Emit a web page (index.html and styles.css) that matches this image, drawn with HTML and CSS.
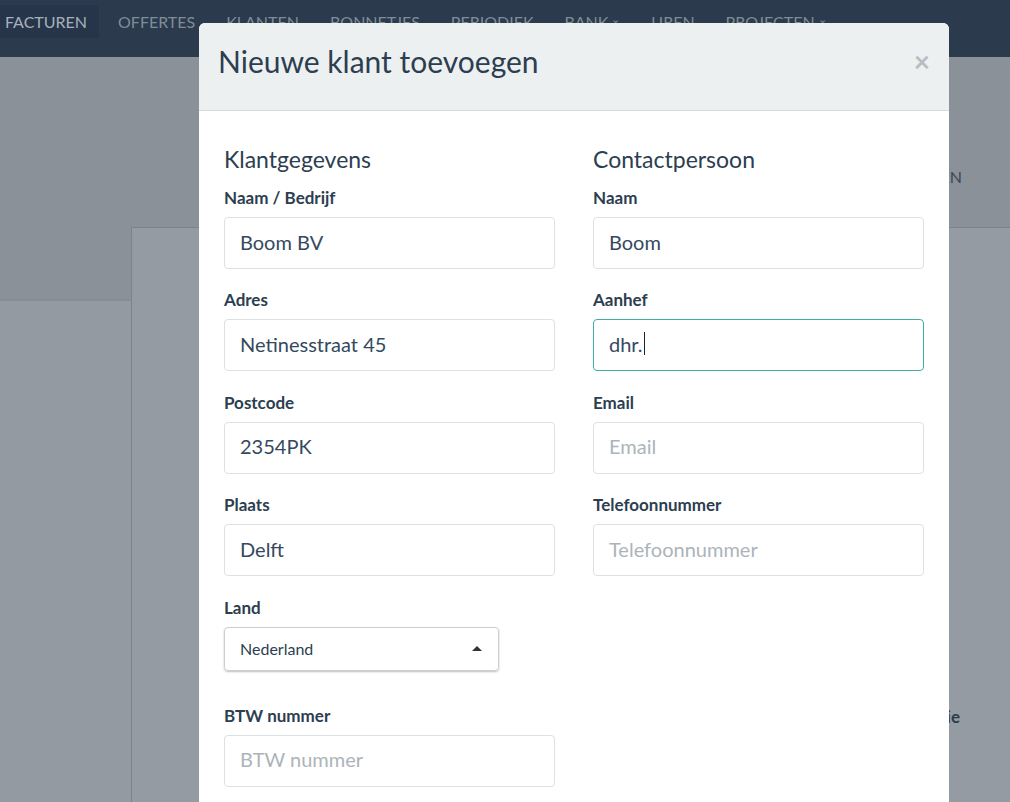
FILE: index.html
```html
<!DOCTYPE html>
<html lang="nl">
<head>
<meta charset="utf-8">
<title>Nieuwe klant toevoegen</title>
<link rel="stylesheet" href="styles.css">
</head>
<body>
<div class="page">
  <nav class="nav">
    <a class="nav-item active">Facturen</a>
    <a class="nav-item">Offertes</a>
    <a class="nav-item">Klanten</a>
    <a class="nav-item">Bonnetjes</a>
    <a class="nav-item">Periodiek</a>
    <a class="nav-item">Bank <span class="caret">&#8964;</span></a>
    <a class="nav-item">Uren</a>
    <a class="nav-item">Projecten <span class="caret">&#8964;</span></a>
  </nav>
  <div class="banner">
    <span class="banner-btn">KLANT TOEVOEGEN</span>
  </div>
  <div class="content">
    <div class="side">
      <div class="side-top"></div>
    </div>
    <div class="panel">
      <div class="panel-label">Categorie</div>
    </div>
  </div>

  <div class="modal">
    <div class="modal-header">
      <h2 class="modal-title">Nieuwe klant toevoegen</h2>
      <span class="close">&times;</span>
    </div>
    <div class="modal-body">
      <div class="col">
        <h3 class="section-title">Klantgegevens</h3>
        <div class="group">
          <label class="label">Naam / Bedrijf</label>
          <div class="input">Boom BV</div>
        </div>
        <div class="group">
          <label class="label">Adres</label>
          <div class="input">Netinesstraat 45</div>
        </div>
        <div class="group">
          <label class="label">Postcode</label>
          <div class="input">2354PK</div>
        </div>
        <div class="group">
          <label class="label">Plaats</label>
          <div class="input">Delft</div>
        </div>
        <div class="group group-select">
          <label class="label">Land</label>
          <div class="select"><span>Nederland</span><span class="tri"></span></div>
        </div>
        <div class="group">
          <label class="label">BTW nummer</label>
          <div class="input placeholder">BTW nummer</div>
        </div>
      </div>
      <div class="col">
        <h3 class="section-title">Contactpersoon</h3>
        <div class="group">
          <label class="label">Naam</label>
          <div class="input">Boom</div>
        </div>
        <div class="group">
          <label class="label">Aanhef</label>
          <div class="input focus">dhr.<span class="cursor"></span></div>
        </div>
        <div class="group">
          <label class="label">Email</label>
          <div class="input placeholder">Email</div>
        </div>
        <div class="group">
          <label class="label">Telefoonnummer</label>
          <div class="input placeholder">Telefoonnummer</div>
        </div>
      </div>
    </div>
  </div>
</div>
</body>
</html>
```

FILE: styles.css
```css
* { box-sizing: border-box; }
html, body {
  margin: 0;
  height: 100%;
}
body {
  font-family: Lato, "Open Sans", "Liberation Sans", sans-serif;
  background: #939aa2;
  overflow: hidden;
}
.page {
  position: relative;
  height: 802px;
  overflow: hidden;
}
.nav {
  height: 57px;
  background: #2b3a4c;
  display: flex;
  align-items: flex-start;
  gap: 7px;
  padding-top: 5px;
}
.nav-item {
  display: flex;
  align-items: center;
  height: 33px;
  padding: 0 12px;
  font-size: 16px;
  text-transform: uppercase;
  color: #7f8d9b;
  white-space: nowrap;
}
.nav-item.active {
  background: #26354a;
  color: #a6b1bc;
  padding-left: 5px;
}
.caret {
  font-size: 11px;
  margin-left: 3px;
  position: relative;
  top: -3px;
}
.banner {
  height: 170px;
  background: #8a9199;
  display: flex;
  justify-content: flex-end;
  align-items: flex-start;
  padding: 110px 48px 0 0;
}
.banner-btn {
  font-size: 16px;
  color: #3c4853;
}
.content {
  display: flex;
  height: 575px;
}
.side {
  width: 131px;
  flex: none;
}
.side-top {
  height: 74px;
  background: #8a9199;
  border-bottom: 2px solid #868d95;
}
.panel {
  flex: 1;
  background: #959ba3;
  border-top: 1px solid #7c838b;
  border-left: 1px solid #7c838b;
  display: flex;
  justify-content: flex-end;
  padding: 478px 50px 0 0;
}
.panel-label {
  font-size: 17px;
  font-weight: 700;
  color: #2e3b48;
}

.modal {
  position: absolute;
  top: 23px;
  left: 199px;
  width: 750px;
  height: 800px;
  background: #fff;
  border-radius: 6px 6px 0 0;
  overflow: hidden;
}
.modal-header {
  height: 88px;
  background: #ecf0f1;
  border-bottom: 1px solid #d5dbdd;
  display: flex;
  align-items: center;
  justify-content: space-between;
  padding: 0 19px 0 19px;
}
.modal-title {
  margin: 0;
  font-size: 30px;
  font-weight: 400;
  color: #2c3e50;
  position: relative;
  top: -6px;
}
.close {
  font-size: 28px;
  font-weight: 700;
  color: #b7bdc1;
  line-height: 1;
  position: relative;
  top: -6px;
}
.modal-body {
  display: grid;
  grid-template-columns: 331px 331px;
  column-gap: 38px;
  padding: 35px 25px 0 25px;
}
.section-title {
  margin: 0 0 15px;
  font-size: 23px;
  font-weight: 400;
  line-height: 27px;
  color: #2c3e50;
}
.group {
  margin-bottom: 21.4px;
}
.group-select {
  margin-bottom: 35px;
}
.label {
  display: block;
  font-size: 17px;
  font-weight: 700;
  line-height: 20px;
  color: #2c3e50;
  margin-bottom: 9px;
}
.input {
  height: 52px;
  border: 1px solid #dce1e3;
  border-radius: 4px;
  padding: 0 15px 3px;
  display: flex;
  align-items: center;
  font-size: 20px;
  color: #34495e;
}
.input.placeholder {
  color: #acb4ba;
}
.input.focus {
  border-color: #3fb09e;
}
.cursor {
  display: inline-block;
  width: 1px;
  height: 23px;
  background: #222;
  margin-left: 1px;
}
.select {
  width: 275px;
  height: 44px;
  border: 1px solid #c9cfd2;
  border-radius: 4px;
  box-shadow: 0 1px 2px rgba(0,0,0,0.25);
  display: flex;
  align-items: center;
  justify-content: space-between;
  padding: 0 16px 0 15px;
  font-size: 16px;
  color: #2c3e50;
}
.tri {
  width: 0;
  height: 0;
  border-left: 5px solid transparent;
  border-right: 5px solid transparent;
  border-bottom: 5px solid #333;
}
```
